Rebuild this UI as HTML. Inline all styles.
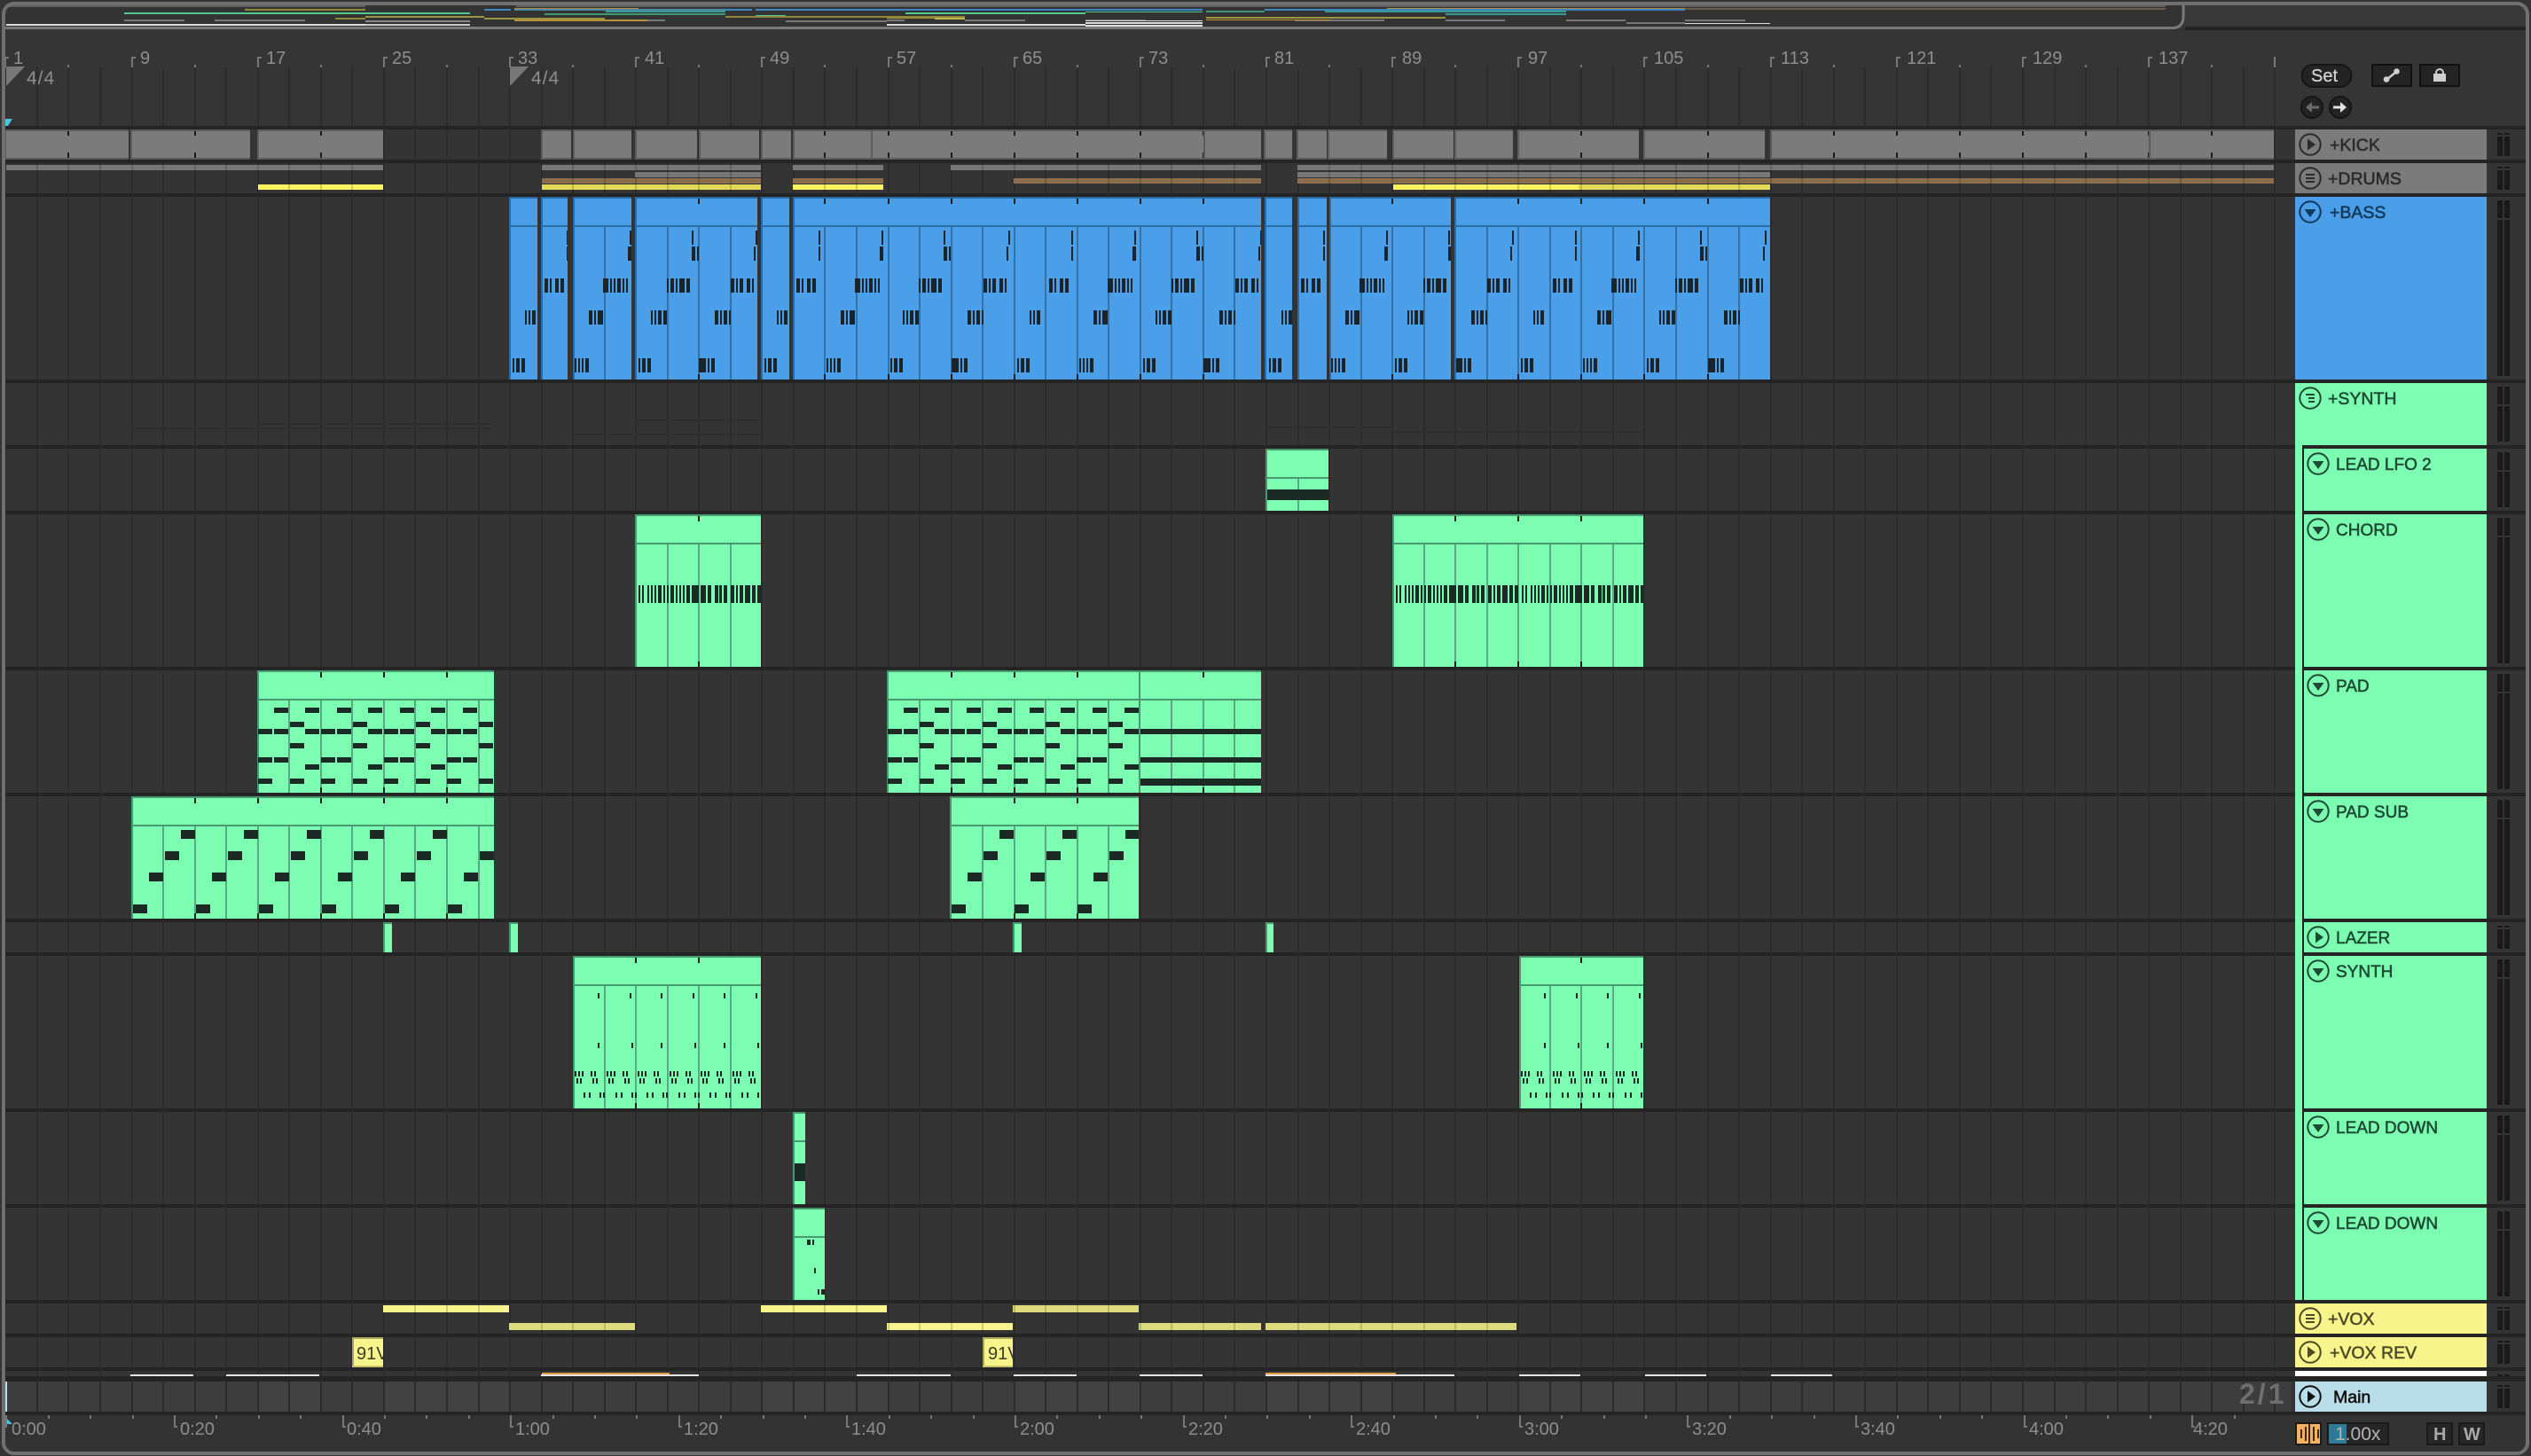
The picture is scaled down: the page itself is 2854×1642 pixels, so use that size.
<!DOCTYPE html>
<html><head><meta charset="utf-8"><title>Arrangement</title>
<style>
html,body{margin:0;padding:0;background:#343434;width:2854px;height:1642px;overflow:hidden}
svg{display:block;position:absolute;left:0;top:0}
text{font-family:"Liberation Sans",sans-serif}
.r{font-size:20px;fill:#8e8e8e}
.t{font-size:19.5px;stroke-width:.55px}
.c{font-size:19px;stroke-width:.55px}
.g{fill:#2a2a2a;stroke:#2a2a2a}
.b{fill:#12385a;stroke:#12385a}
.n{fill:#1c4a33;stroke:#1c4a33}
.y{fill:#4c4b24;stroke:#4c4b24}
.m{fill:#111;stroke:#111}
</style></head><body>
<svg xmlns="http://www.w3.org/2000/svg" width="2854" height="1642" viewBox="0 0 2854 1642">
<g id="art"></g>
<g class="r">
<text class="r" x="15" y="72">1</text><text class="r" x="158" y="72">9</text><text class="r" x="300" y="72">17</text><text class="r" x="442" y="72">25</text><text class="r" x="584" y="72">33</text><text class="r" x="727" y="72">41</text><text class="r" x="868" y="72">49</text><text class="r" x="1011" y="72">57</text><text class="r" x="1153" y="72">65</text><text class="r" x="1295" y="72">73</text><text class="r" x="1437" y="72">81</text><text class="r" x="1581" y="72">89</text><text class="r" x="1723" y="72">97</text><text class="r" x="1865" y="72">105</text><text class="r" x="2008" y="72">113</text><text class="r" x="2150" y="72">121</text><text class="r" x="2292" y="72">129</text><text class="r" x="2434" y="72">137</text>
<text x="30" y="95" style="font-size:21px;fill:#8e8e8e;letter-spacing:1px">4/4</text><text x="599" y="95" style="font-size:21px;fill:#8e8e8e;letter-spacing:1px">4/4</text>
<text class="r" x="13" y="1618">0:00</text><text class="r" x="203" y="1618">0:20</text><text class="r" x="391" y="1618">0:40</text><text class="r" x="581" y="1618">1:00</text><text class="r" x="771" y="1618">1:20</text><text class="r" x="960" y="1618">1:40</text><text class="r" x="1150" y="1618">2:00</text><text class="r" x="1340" y="1618">2:20</text><text class="r" x="1529" y="1618">2:40</text><text class="r" x="1719" y="1618">3:00</text><text class="r" x="1908" y="1618">3:20</text><text class="r" x="2098" y="1618">3:40</text><text class="r" x="2288" y="1618">4:00</text><text class="r" x="2473" y="1618">4:20</text>
</g>
<text x="402" y="1533" style="font-size:20px;fill:#3a3a20">91V</text>
<text x="1114" y="1533" style="font-size:20px;fill:#3a3a20">91V</text>
<g id="cover"></g>
<text x="2525" y="1583" style="font-size:32px;font-weight:bold;fill:#6f6f6f;letter-spacing:3px">2/1</text>
<text class="t g" x="2627" y="170">+KICK</text>
<text class="t g" x="2625" y="208">+DRUMS</text>
<text class="t b" x="2627" y="246">+BASS</text>
<text class="t n" x="2625" y="456">+SYNTH</text>
<text class="c n" x="2634" y="530">LEAD LFO 2</text>
<text class="c n" x="2634" y="604">CHORD</text>
<text class="c n" x="2634" y="780">PAD</text>
<text class="c n" x="2634" y="922">PAD SUB</text>
<text class="c n" x="2634" y="1064">LAZER</text>
<text class="c n" x="2634" y="1102">SYNTH</text>
<text class="c n" x="2634" y="1278">LEAD DOWN</text>
<text class="c n" x="2634" y="1386">LEAD DOWN</text>
<text class="t y" x="2625" y="1494">+VOX</text>
<text class="t y" x="2627" y="1532">+VOX REV</text>
<text class="t m" x="2631" y="1582">Main</text>
<text x="2606" y="92" style="font-size:20px;fill:#d2d2d2;stroke:#d2d2d2;stroke-width:.3px">Set</text>
<text x="2633" y="1624" style="font-size:21px;fill:#b4b4b4">1.00x</text>
<text x="2744" y="1624" style="font-size:20px;font-weight:bold;fill:#a8a8a8">H</text>
<text x="2778" y="1624" style="font-size:20px;font-weight:bold;fill:#a8a8a8">W</text>
</svg>
<script>
var s='',P=35.54;
function X(b){return 6.4+(b-1)*17.77}
function R(x,y,w,h,c){if(w>0&&h>0)s+='<rect x="'+x+'" y="'+y+'" width="'+w+'" height="'+h+'" fill="'+c+'"/>'}
function gx(i){return Math.round(6.4+i*P)-1}
/* base */
R(0,0,2854,1642,'#343434');
R(6,6,2844,24,'#393939');
R(6,6,2456,24,'#333333');
R(6,34,2844,108,'#353535');
/* main row light */
R(6,1558,2578,34,'#3d3d3d');
[[291,362],[433,574],[859,1001],[1143,1285],[1428,1570],[1712,1855]].forEach(function(a){R(a[0],1558,a[1]-a[0],34,'#424242')});
R(6,1596,2844,42,'#333333');
/* grid */
for(var i=0;i<=72;i++){R(gx(i),76,2,1520,'#2b2b2b')}
/* faint automation */
[[149,556,482],[291,556,477],[717,858,473],[646,858,489],[1428,1570,481],[1570,1853,486]].forEach(function(a){R(a[0],a[2],a[1]-a[0],2,'#2e2e2e')});
/* lanes */
function lane(a,b,y,h,c){R(a,y,b-a,h,c);for(var i=0;i<=72;i++){var x=gx(i);if(x>a&&x<b-1)R(x,y,2,h,'rgba(0,0,0,.16)')}}
var G='#777777',B='#8a6e4e',Y1='#fbf25f',Y2='#e2da55';
[[7,432],[611,858],[894,996],[1072,1422],[1463,2564]].forEach(function(a){lane(a[0],a[1],186,6,G)});
[[716,858],[1463,1996]].forEach(function(a){lane(a[0],a[1],194,6,G)});
[[611,858],[894,996],[1143,1422],[1463,2564]].forEach(function(a){lane(a[0],a[1],201,6,B)});
[[291,432,Y1],[611,858,Y2],[894,996,Y1],[1571,1780,Y1],[1780,1996,Y2]].forEach(function(a){lane(a[0],a[1],208,6,a[2])});
/* vox */
var V1='#f8f48c',V2='#dedb7e';
[[432,574,V1],[858,1000,V1],[1142,1284,V2]].forEach(function(a){lane(a[0],a[1],1472,8,a[2])});
[[574,716,V2],[1000,1142,V1],[1284,1422,V2],[1427,1710,V2]].forEach(function(a){lane(a[0],a[1],1492,8,a[2])});
/* kick */
function ticks(a,b,y0,y1,h1,h2){for(var k=0;k<40;k++){var x=Math.round(X(1+4*k))-1;if(x>a+3&&x<b-3){R(x,y0,2,h1,'#1c1c1c');R(x,y1-h2,2,h2,'#1c1c1c')}}}
[[7,145],[149,282],[292,432],[612,644],[648,712],[718,786],[790,856],[860,892],[896,982],[984,1422],[1427,1457],[1464,1496],[1499,1564],[1572,1639],[1642,1706],[1713,1848],[1855,1990],[1998,2564]].forEach(function(a){
 R(a[0]-2,146,a[1]-a[0]+2,34,'#5c5c5c');
 R(a[0],148,a[1]-a[0],30,'#7b7b7b');
 ticks(a[0],a[1],148,178,5,6);
});
R(1357,148,2,30,'#5c5c5c');R(2423,148,2,30,'#5c5c5c');
/* clips */
function clip(a,b,y0,y1,c,t,t2){
 R(a,y0,b-a,y1-y0,c);
 R(a,y0,2,y1-y0,t);R(a,y0,b-a,2,t);R(a,y0+32,b-a,2,t);
 for(var i=0;i<=72;i++){var x=gx(i);if(x>a+3&&x<b-3)R(x,y0+34,2,y1-y0-34,t2)}
 ticks(a,b,y0+2,y1,6,6);
}
var bl='#4a9fe8',blT='#2a6da6',blL='#3273aa',nt='#1a2429';
var bc=[[574,606],[610,640],[646,712],[716,854],[858,890],[894,1422],[1426,1457],[1463,1496],[1499,1636],[1640,1996]];
bc.forEach(function(a){clip(a[0],a[1],222,428,bl,blT,blL)});
function bn(x,w,y,h){bc.forEach(function(a){var l=Math.max(x,a[0]+2),r=Math.min(x+w,a[1]);R(l,y,r-l,h,nt)})}
var E=[[[0,2],[4,4],[10,2],[12,2]],[[0,2],[4,2],[8,2],[12,4]],[[0,2],[4,4],[10,4]],[[0,8],[10,2],[14,4]]];
var D=[[[0,2],[4,2],[8,4]],[[0,4],[6,2],[10,6]],[[0,2],[4,2],[8,4],[14,4]],[[0,4],[6,2],[10,4],[16,2]]];
var C=[[[0,4],[6,2],[12,4],[18,4]],[[0,6],[8,2],[12,2],[16,4],[22,2],[26,2]],[[0,2],[4,4],[10,2],[14,6],[22,4]],[[0,4],[6,2],[10,4],[18,4],[24,2]]];
var Ao=[64,64,63,64],Bn=[[[64,2]],[[62,4]],[[63,4],[69,2]],[[62,2]]],Es=[3,2,3,0],Ds=[17,18,17,18],Cs=[39,34,35,36];
for(var k=0;k<20;k++){
 var S=Math.round(575+71.08*k),m=k%4;
 E[m].forEach(function(n){bn(S+Es[m]+n[0],n[1],404,16)});
 D[m].forEach(function(n){bn(S+Ds[m]+n[0],n[1],350,16)});
 C[m].forEach(function(n){bn(S+Cs[m]+n[0],n[1],314,16)});
 bn(S+Ao[m],2,260,16);
 Bn[m].forEach(function(n){bn(S+n[0],n[1],278,16)});
}
/* green */
var gr='#7dfdb2',grT='#479a70',grL='#5aa985',gn='#1b2a24';
function gc(a,b,y0,y1){clip(a,b,y0,y1,gr,grT,grL)}
function N(x,y,w,h){R(Math.round(x),y,Math.round(w),h,gn)}
/* lfo */
gc(1427,1498,506,576);R(1429,552,69,12,gn);
/* chord */
var ch=[[0,2],[4,2],[10,2],[14,2],[18,2],[22,4],[28,2],[32,2],[36,4],[42,2],[46,2],[50,2],[54,4],[60,8],[70,6],[78,4],[86,4],[91,3],[96,4],[104,4],[110,2],[114,4],[120,2],[122,4],[128,4],[134,4]];
gc(716,858,580,752);ch.forEach(function(n){N(720+n[0],660,n[1],20)});
gc(1570,1853,580,752);
[0,142].forEach(function(o){ch.forEach(function(n){var x=1574+o+n[0];if(x<1853)R(x,660,Math.min(n[1],1853-x),20,gn)})});
/* pad */
var padL={798:[1,3,5,7,9,11,13,15],814:[2,6,10,14],822:[0,1,3,4,5,7,8,9,11,12,13,15],838:[2,6,10,14],854:[0,1,4,5,8,9,12,13],862:[3,7,11,15],878:[0,2,4,6,8,10,12,14]};
function pad(a,b,st){gc(a,b,756,894);
 for(var y in padL){padL[y].forEach(function(c){var x=Math.round(st+c*17.77);if(x<b)R(x,+y,Math.min(16,b-x),6,gn)})}
}
pad(290,557,291);
pad(1000,1285,1001);
gc(1284,1422,756,894);
[[822,6],[854,6],[878,8]].forEach(function(a){R(1286,a[0],136,a[1],gn)});
/* pad sub */
function sub(a,b,st,n){gc(a,b,898,1036);
 for(var k=0;k<n;k++){var q=st+71.08*k;
  [[1020,0],[984,18],[960,36],[936,54]].forEach(function(l){var x=Math.round(q+l[1]);if(x<b)R(x,l[0],Math.min(16,b-x),10,gn)});
 }}
sub(148,557,150,6);
sub(1071,1284,1073,3);
/* lazer */
[[432,442],[574,584],[1142,1152],[1427,1436]].forEach(function(a){R(a[0],1040,a[1]-a[0],34,gr);R(a[0],1040,2,34,grT);R(a[0],1040,a[1]-a[0],2,grT)});
/* synth */
function syn(a,b,n){gc(a,b,1078,1250);
 function t(x,y){x=Math.round(x);if(x<b)R(x,y,2,6,gn)}
 for(var i=0;i<n;i++){var q=a+P*i;
  t(q+28,1120);t(q+28+(i%2?2:0),1176);
  [0,4,8,18,22].forEach(function(o){t(q+2+o,1208)});
  [0,4,18,22].forEach(function(o){t(q+4+o,1216)});
  [0,6,18,22].forEach(function(o){t(q+12+o,1232)});
 }}
syn(646,858,6);syn(1713,1853,4);
/* lead downs */
R(894,1254,14,104,gr);R(894,1254,2,104,grT);R(894,1254,14,2,grT);R(894,1286,14,2,grT);R(896,1312,12,20,gn);
gc(894,930,1362,1466);
[[910,1398,4],[916,1398,2],[918,1430,2],[922,1454,2],[926,1454,4]].forEach(function(a){R(a[0],a[1],a[2],6,gn)});
/* vox rev clips */
[[397,432],[1108,1142]].forEach(function(a){R(a[0],1508,a[1]-a[0],34,'#f8f48c');R(a[0],1508,2,34,'#a9a65c');R(a[0],1508,a[1]-a[0],2,'#a9a65c');R(a[0],1540,a[1]-a[0],2,'#c9c670')});
/* white row */
[[147,218],[255,360],[610,788],[966,1072],[1143,1214],[1285,1356],[1427,1640],[1713,1782],[1855,1924],[1997,2066]].forEach(function(a){R(a[0],1550,a[1]-a[0],2,'#e6e6e6')});
[[611,755],[1427,1574]].forEach(function(a){R(a[0],1548,a[1]-a[0],2,'#e39a45')});
document.getElementById('art').innerHTML=s;
s='';
/* cover 91V overflow */
R(432,1508,30,34,'#343434');R(1142,1508,30,34,'#343434');
R(gx(12),1508,2,34,'#2b2b2b');R(gx(32),1508,2,34,'#2b2b2b');
/* cyan markers */
s+='<path d="M6 134H14L9 142H6Z" fill="#4ec2dc"/><path d="M6 1598L14 1606H6Z" fill="#4ec2dc"/>';
R(6,1558,2,34,'#a8e4f2');
/* separators */
[[142,146],[180,184],[218,222],[428,432],[502,506],[576,580],[752,756],[894,898],[1036,1040],[1074,1078],[1250,1254],[1358,1362],[1466,1470],[1504,1508],[1542,1546],[1552,1558],[1592,1596]].forEach(function(a){R(6,a[0],2844,a[1]-a[0],'#242424')});
R(2464,30,386,4,'#232323');
/* ruler ticks */
for(var k=0;k<18;k++){var x=Math.round(X(1+8*k))-1;R(x,64,2,12,'#777');R(x,64,5,2,'#777');var y=Math.round(X(5+8*k))-1;if(y<2565)R(y,73,2,3,'#777')}
R(2564,64,2,12,'#777');
s+='<path d="M7 75H28L7 97Z" fill="#777"/><path d="M575 75H596L575 97Z" fill="#777"/>';
/* time ticks */
for(var k=0;k<=53;k++){var x=Math.round(6.4+47.4*k);if(x<2570){R(x,1596,2,k%4==0?14:4,'#777');if(k%4==0&&k>0)R(x,1608,4,2,'#777')}}
/* overview */
[[6,412,6,2,'#5e5e5e'],[582,2442,6,2,'#5e5e5e'],[1900,2442,9,2,'#6d5a47'],
[140,530,14,2,'#53c98e'],[276,412,10,2,'#8f8838'],[140,208,22,2,'#777'],[242,344,22,2,'#777'],[378,412,20,2,'#8f8838'],[7,412,27,2,'#ddd'],[412,530,27,2,'#c8c8c8'],[412,530,23,2,'#888'],[412,546,18,2,'#9a9540'],[546,682,20,2,'#9a9540'],[546,576,10,2,'#3a87c4'],[580,818,10,2,'#4a89a8'],[580,720,9,1,'#b58c3c'],[614,818,15,2,'#3d9a72'],[683,818,12,2,'#3a9a92'],[818,848,10,2,'#3a87c4'],[852,886,17,2,'#53c98e'],[818,1088,18,2,'#8f8838'],[886,1000,23,2,'#777'],[580,730,22,2,'#b8913c'],[730,750,22,2,'#777'],[852,1356,10,2,'#3a87c4'],[1021,1224,14,2,'#53c98e'],[1224,1356,13,1,'#53c98e'],[1360,1426,12,2,'#3d9a72'],[1426,1900,10,2,'#3a87c4'],[1564,1900,9,1,'#b58c3c'],[1494,1766,12,2,'#3a9a92'],[1630,1766,15,2,'#3a9a92'],[1000,1088,20,1,'#9a9540'],[1054,1088,20,2,'#c0b84a'],[1360,1630,19,2,'#9a9540'],[1000,1020,22,2,'#777'],[1088,1156,22,2,'#777'],[1224,1292,22,2,'#777'],[1460,1561,22,2,'#777'],[1630,1697,22,2,'#777'],[1766,1833,22,2,'#777'],[1900,1968,22,2,'#777'],[1834,1900,25,2,'#777'],[1900,1996,26,1,'#ddd'],[1000,1224,27,2,'#ddd'],[1224,1356,23,1,'#ddd'],[1224,1356,25,1,'#ddd'],[1224,1356,26,1,'#ddd'],[1224,1356,28,1,'#ddd'],[1224,1356,29,1,'#ddd'],[1360,1500,22,1,'#c98f3c']].forEach(function(a){R(a[0],a[2],a[1]-a[0],a[3],a[4])});
s+='<path d="M6 31.5H2450Q2462 31.5 2462 18V6" fill="none" stroke="#7a7a7a" stroke-width="3"/>';
/* headers */
var hg='#7b7b7b',hb='#4a9fe8',hn='#7dfdb2',hy='#f8f48c',hm='#b9dde9';
var C1='#2a2a2a',C2='#12385a',C3='#1c4a33',C4='#4c4b24',C5='#111';
function ic(cx,cy,t,c){
 s+='<circle cx="'+cx+'" cy="'+cy+'" r="11.7" fill="none" stroke="'+c+'" stroke-width="2"/>';
 if(t=='p')s+='<path d="M'+(cx-3)+' '+(cy-6.5)+'L'+(cx+6)+' '+cy+'L'+(cx-3)+' '+(cy+6.5)+'Z" fill="'+c+'"/>';
 if(t=='d')s+='<path d="M'+(cx-6.5)+' '+(cy-3)+'H'+(cx+6.5)+'L'+cx+' '+(cy+6)+'Z" fill="'+c+'"/>';
 if(t=='l')[-4,0,4].forEach(function(o){R(cx-5,cy+o-1,10,2,c)});
 if(t=='s'){R(cx-5,cy-5,10,2,c);R(cx-2,cy-1,7,2,c);R(cx-2,cy+3,7,2,c)}
}
[[146,180,hg,C1,'p',2605],[184,218,hg,C1,'l',2605],[222,428,hb,C2,'d',2605],[1470,1504,hy,C4,'l',2605],[1508,1542,hy,C4,'p',2605],[1558,1592,hm,C5,'p',2605]].forEach(function(a){R(2588,a[0],216,a[1]-a[0],a[2]);ic(a[5],a[0]+17,a[4],a[3])});
R(2588,432,216,1034,hn);
ic(2605,449,'s',C3);
[[502,506],[576,580],[752,756],[894,898],[1036,1040],[1074,1078],[1250,1254],[1358,1362]].forEach(function(a){R(2596,a[0],208,a[1]-a[0],'#242424')});
R(2596,502,2,964,'#242424');
[506,580,756,898,1040,1078,1254,1362].forEach(function(y,i){ic(2614,y+17,i==4?'p':'d',C3)});
R(2588,1546,216,6,'#ffffff');
/* meters */
[[146,180],[184,218],[222,428],[432,502],[506,576],[580,752],[756,894],[898,1036],[1040,1074],[1078,1250],[1254,1358],[1362,1466],[1470,1504],[1508,1542],[1558,1592]].forEach(function(a){
 var h=a[1]-a[0]>60?20:2,l=a[1]-a[0]-8-h-2;
 [2816,2824].forEach(function(x){R(x,a[0]+4,6,h,'#1a1a1a');R(x,a[0]+4+h+2,6,l,'#1a1a1a')});
});
[2816,2824].forEach(function(x){R(x,1550,6,2,'#1a1a1a')});
/* buttons */
s+='<rect x="2595.5" y="73" width="56" height="25" rx="12.5" fill="#232323" stroke="#151515" stroke-width="2"/>';
s+='<rect x="2675" y="73" width="44" height="24" fill="#242424" stroke="#111" stroke-width="2"/>';
s+='<rect x="2729" y="73" width="44" height="24" fill="#242424" stroke="#111" stroke-width="2"/>';
s+='<path d="M2691 90L2702 81" stroke="#cfcfcf" stroke-width="2.5"/><circle cx="2691" cy="89.5" r="3.3" fill="#cfcfcf"/><circle cx="2702.5" cy="80.5" r="3.3" fill="#cfcfcf"/>';
s+='<rect x="2744" y="83" width="14" height="9" fill="#cfcfcf"/><path d="M2747 83.5V82A4 4 0 0 1 2755 82V83.5" fill="none" stroke="#cfcfcf" stroke-width="2"/>';
s+='<circle cx="2607" cy="121" r="12" fill="#232323" stroke="#151515" stroke-width="2"/><circle cx="2639" cy="121" r="12" fill="#232323" stroke="#151515" stroke-width="2"/>';
s+='<path d="M2615 119.5H2607V115L2600 121L2607 127V122.5H2615Z" fill="#6b6b6b"/><path d="M2631 119.5H2639V115L2646 121L2639 127V122.5H2631Z" fill="#e2e2e2"/>';
R(2588,1604,30,26,'#1a1a1a');R(2590,1606,26,22,'#f5b060');
[[2594,5],[2599,8],[2603,11],[2608,8],[2613,5]].forEach(function(a){R(a[0],1617-a[1],2,a[1]*2,'#3a2a14')});
R(2624,1604,70,26,'#1a1a1a');R(2626,1606,66,22,'#262626');R(2626,1606,20,22,'#2f7a96');
R(2736,1604,30,26,'#1a1a1a');R(2738,1606,26,22,'#262626');
R(2772,1604,30,26,'#1a1a1a');R(2774,1606,26,22,'#262626');
/* frame */
s+='<rect x="4" y="4" width="2846" height="1635" rx="12" fill="none" stroke="#707070" stroke-width="4"/>';
document.getElementById('cover').innerHTML=s;
</script>
</body></html>
